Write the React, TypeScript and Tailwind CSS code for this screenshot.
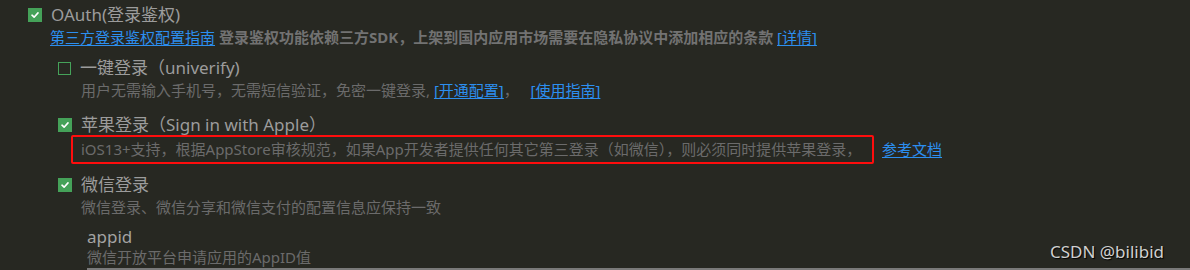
import React from "react";

const font = "font-['Noto_Sans','Noto_Sans_CJK_SC',sans-serif]";

/** Green settings checkbox; filled with a white tick when checked. */
function Check({ checked }: { checked: boolean }) {
  if (!checked) {
    return <span className="block w-[13px] h-[13px] border border-[#45a259] flex-shrink-0" />;
  }
  return (
    <span className="flex items-center justify-center w-[14px] h-[14px] bg-[#45a259] flex-shrink-0">
      <svg width="10" height="10" viewBox="0 0 10 10" fill="none">
        <path d="M2 5.2 L4.1 7.2 L8 2.9" stroke="#ffffff" strokeWidth="1.6" strokeLinecap="round" strokeLinejoin="round" />
      </svg>
    </span>
  );
}

function Link({ children }: { children: React.ReactNode }) {
  return <span className="text-[#2c8ff0] underline underline-offset-2 decoration-1">{children}</span>;
}

function Heading({ checked, children }: { checked: boolean; children: React.ReactNode }) {
  return (
    <div className="flex items-center h-[20px] gap-[9px]">
      <Check checked={checked} />
      <span className="text-[17px] leading-[20px] text-[#9c9c9c] whitespace-nowrap">{children}</span>
    </div>
  );
}

function Desc({ children, className = "" }: { children: React.ReactNode; className?: string }) {
  return (
    <div className={`h-[22px] leading-[22px] text-[15px] text-[#6b6b6b] whitespace-nowrap ${className}`}>
      {children}
    </div>
  );
}

export default function App() {
  return (
    <div className={`relative w-[1190px] h-[270px] overflow-hidden bg-[#272822] ${font}`}>
      <div className="pl-[28px] pt-[5px]">
        {/* OAuth */}
        <Heading checked>OAuth(登录鉴权)</Heading>
        <Desc className="mt-[1px] pl-[22px]">
          <Link>第三方登录鉴权配置指南</Link>{" "}
          <span className="font-bold text-[#727272]">
            登录鉴权功能依赖三方SDK，上架到国内应用市场需要在隐私协议中添加相应的条款
          </span>{" "}
          <Link>[详情]</Link>
        </Desc>

        <div className="pl-[30px]">
          {/* 一键登录 */}
          <div className="mt-[10px]">
            <Heading checked={false}>一键登录（univerify)</Heading>
            <Desc className="mt-[1px] pl-[23px]">
              用户无需输入手机号，无需短信验证，免密一键登录, <Link>[开通配置]</Link>，&nbsp;&nbsp; <Link>[使用指南]</Link>
            </Desc>
          </div>

          {/* 苹果登录 */}
          <div className="mt-[14px]">
            <Heading checked>苹果登录（Sign in with Apple）</Heading>
            <div className="flex items-center h-[29px] pl-[13px] gap-[8px]">
              <span className="flex items-center h-[29px] w-[803px] pl-[8px] border-2 border-[#ff0d0d] rounded-[2px] text-[15px] text-[#6b6b6b] whitespace-nowrap">
                iOS13+支持，根据AppStore审核规范，如果App开发者提供任何其它第三登录（如微信），则必须同时提供苹果登录，
              </span>
              <span className="text-[15px]">
                <Link>参考文档</Link>
              </span>
            </div>
          </div>

          {/* 微信登录 */}
          <div className="mt-[11px]">
            <Heading checked>微信登录</Heading>
            <Desc className="mt-[1px] pl-[23px]">微信登录、微信分享和微信支付的配置信息应保持一致</Desc>
            <div className="pl-[29px] mt-[9px]">
              <div className="h-[20px] leading-[20px] text-[17px] text-[#a3a3a3]">appid</div>
              <div className="h-[20px] leading-[20px] text-[15px] text-[#6b6b6b] whitespace-nowrap">
                微信开放平台申请应用的AppID值
              </div>
              <div className="mt-[1px] h-[2px] bg-[#7a7a7a]" />
            </div>
          </div>
        </div>
      </div>

      {/* watermark */}
      <span className="absolute left-[1050px] top-[241px] text-[17px] leading-[22px] text-[#d0d0d0] [text-shadow:1px_1px_1px_#000] whitespace-nowrap">
        CSDN @bilibid
      </span>
    </div>
  );
}
